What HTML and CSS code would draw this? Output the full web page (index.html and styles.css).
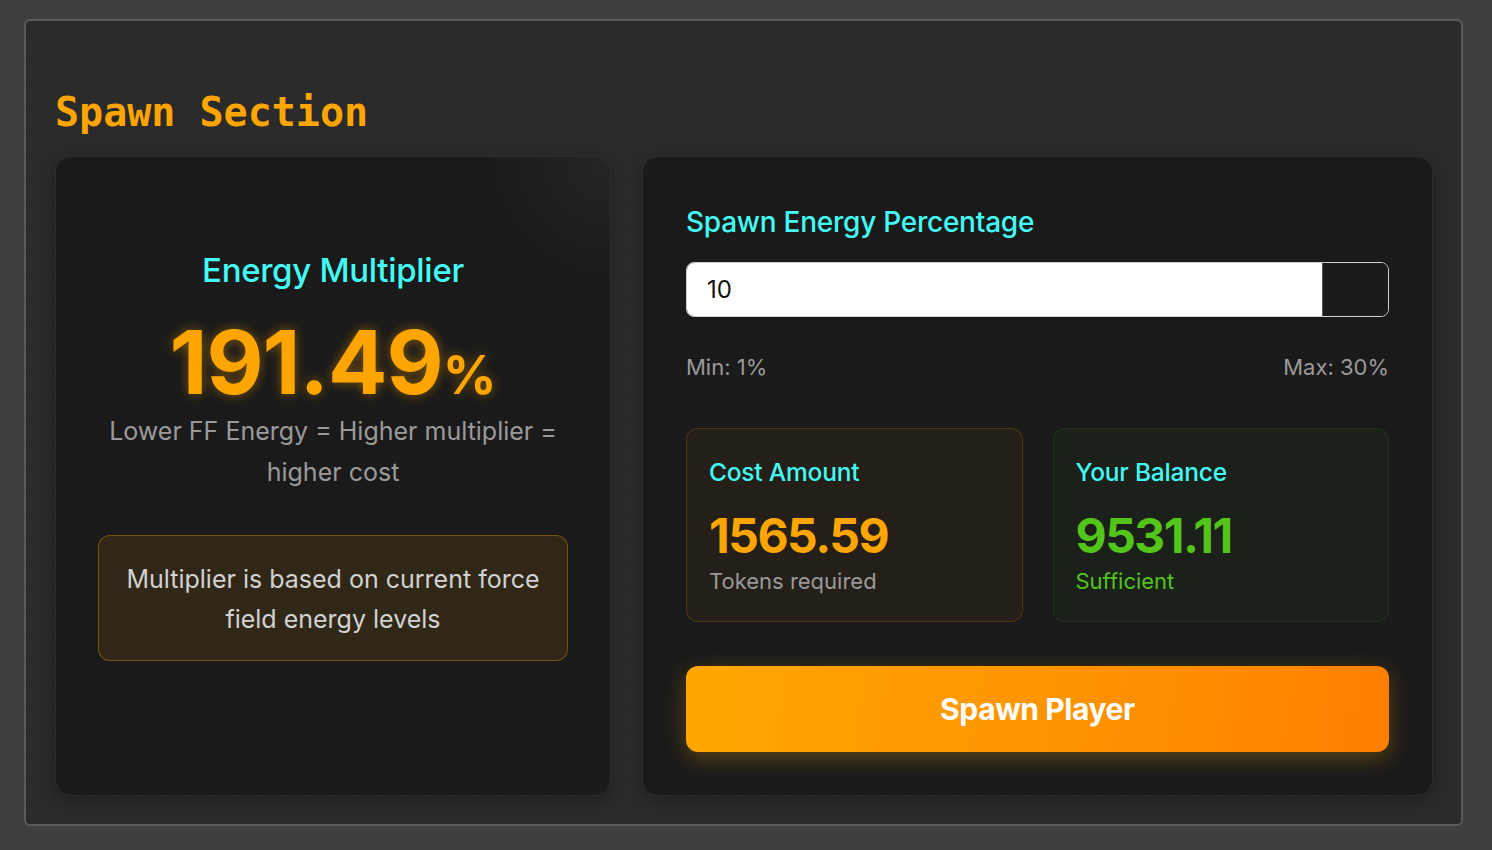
FILE: index.html
```html
<!DOCTYPE html>
<html lang="en">
<head>
<meta charset="utf-8">
<title>Spawn Section</title>
<link rel="stylesheet" href="styles.css">
</head>
<body>
  <section class="spawn">
    <h2 class="spawn-title">Spawn Section</h2>
    <div class="spawn-grid">
      <div class="card card-multiplier">
        <h3 class="mult-label">Energy Multiplier</h3>
        <div class="mult-value">191.49<span class="mult-pct">%</span></div>
        <p class="mult-desc">Lower FF Energy = Higher multiplier = higher cost</p>
        <div class="mult-note">Multiplier is based on current force field energy levels</div>
      </div>
      <div class="card card-form">
        <label class="form-label">Spawn Energy Percentage</label>
        <div class="input-wrap">
          <div class="input-field">10</div>
          <div class="input-spin"></div>
        </div>
        <div class="range-row">
          <span>Min: 1%</span>
          <span>Max: 30%</span>
        </div>
        <div class="stats">
          <div class="stat stat-cost">
            <div class="stat-label">Cost Amount</div>
            <div class="stat-value">1565.59</div>
            <div class="stat-sub">Tokens required</div>
          </div>
          <div class="stat stat-balance">
            <div class="stat-label">Your Balance</div>
            <div class="stat-value">9531.11</div>
            <div class="stat-sub">Sufficient</div>
          </div>
        </div>
        <button class="spawn-btn">Spawn Player</button>
      </div>
    </div>
  </section>
</body>
</html>
```
FILE: styles.css
```css
* { box-sizing: border-box; }

html, body { height: 100%; }

body {
  margin: 0;
  padding: 19px 29px 24px 24px;
  background: #3f3f3f;
  font-family: Inter, "Noto Sans", "Liberation Sans", sans-serif;
}

.spawn {
  border: 2px solid #5b5b5b;
  border-radius: 6px;
  background-color: #2a2a2a;
  background-image: radial-gradient(rgba(255,255,255,0.025) 1px, transparent 1px);
  background-size: 3px 3px;
  padding: 28px 28px 28px 29px;
}

.spawn-title {
  margin: 39px 0 20px;
  font-family: "DejaVu Sans Mono", "Liberation Mono", monospace;
  font-weight: 700;
  font-size: 40px;
  line-height: 48px;
  color: #ffa500;
}

.spawn-grid {
  display: grid;
  grid-template-columns: 556fr 791fr;
  gap: 31px;
}

.card {
  background: #1a1a1a;
  border: 1px solid #2d2d2d;
  border-radius: 16px;
  box-shadow: 0 4px 14px rgba(0,0,0,0.25);
}

.card-multiplier {
  display: flex;
  flex-direction: column;
  align-items: center;
  text-align: center;
  padding: 94px 42px 40px;
  background-image:
    radial-gradient(circle at 100% 0%, rgba(255,255,255,0.05), rgba(255,255,255,0) 130px);
}

.mult-label {
  margin: 0;
  font-size: 33px;
  line-height: 38px;
  font-weight: 500;
  color: #44fbf5;
  letter-spacing: -0.3px;
}

.mult-value {
  margin-top: 30px;
  font-size: 88px;
  line-height: 86px;
  font-weight: 700;
  color: #ffa500;
  letter-spacing: -1px;
  text-shadow: 0 0 12px rgba(255,165,0,0.45);
}

.mult-pct {
  font-size: 53px;
  letter-spacing: 0;
}

.mult-desc {
  margin: -7px 0 0;
  font-size: 25px;
  line-height: 41px;
  color: #9a9a9a;
}

.mult-note {
  align-self: stretch;
  margin-top: 42px;
  padding: 23px 18px 21px;
  border: 1px solid rgba(255,165,0,0.35);
  border-radius: 12px;
  background: #302717;
  font-size: 25px;
  line-height: 40px;
  color: #d2d2d2;
}

.card-form {
  display: flex;
  flex-direction: column;
  padding: 48px 43px 43px;
}

.form-label {
  font-size: 28px;
  line-height: 34px;
  font-weight: 500;
  color: #44fbf5;
  letter-spacing: -0.25px;
}

.input-wrap {
  display: flex;
  margin-top: 23px;
  height: 55px;
  border: 1px solid #cfcfcf;
  border-radius: 8px;
  overflow: hidden;
}

.input-field {
  flex: 1;
  background: #fff;
  padding: 0 20px;
  display: flex;
  align-items: center;
  font-size: 24px;
  color: #111;
}

.input-spin {
  width: 66px;
  background: #1b1b1b;
  border-left: 1px solid #555;
}

.range-row {
  display: flex;
  justify-content: space-between;
  margin-top: 37px;
  font-size: 22px;
  line-height: 26px;
  color: #9a9a9a;
}

.stats {
  display: grid;
  grid-template-columns: 1fr 1fr;
  gap: 30px;
  margin-top: 48px;
}

.stat {
  height: 194px;
  border-radius: 12px;
  padding: 29px 22px 0;
}

.stat-cost {
  background: #241f18;
  border: 1px solid rgba(255,165,0,0.2);
}

.stat-balance {
  background: #1b201b;
  border: 1px solid rgba(82,196,26,0.12);
}

.stat-label {
  font-size: 24.5px;
  line-height: 29px;
  font-weight: 500;
  color: #44fbf5;
  letter-spacing: -0.2px;
}

.stat-value {
  margin-top: 23px;
  font-size: 48px;
  line-height: 52px;
  font-weight: 700;
  letter-spacing: -1.5px;
}

.stat-cost .stat-value { color: #ffa500; }
.stat-balance .stat-value { color: #52c41a; }

.stat-sub {
  margin-top: 6px;
  font-size: 22px;
  line-height: 26px;
  color: #9a9a9a;
}

.stat-balance .stat-sub { color: #52c41a; }

.spawn-btn {
  margin-top: 44px;
  height: 86px;
  border: none;
  border-radius: 12px;
  background: linear-gradient(100deg, #ffa800 0%, #ff9500 50%, #ff7f00 100%);
  box-shadow: 0 6px 22px rgba(255,165,0,0.3);
  font-family: Inter, "Noto Sans", sans-serif;
  font-size: 30px;
  font-weight: 700;
  color: #fff;
  letter-spacing: -0.4px;
}
```
